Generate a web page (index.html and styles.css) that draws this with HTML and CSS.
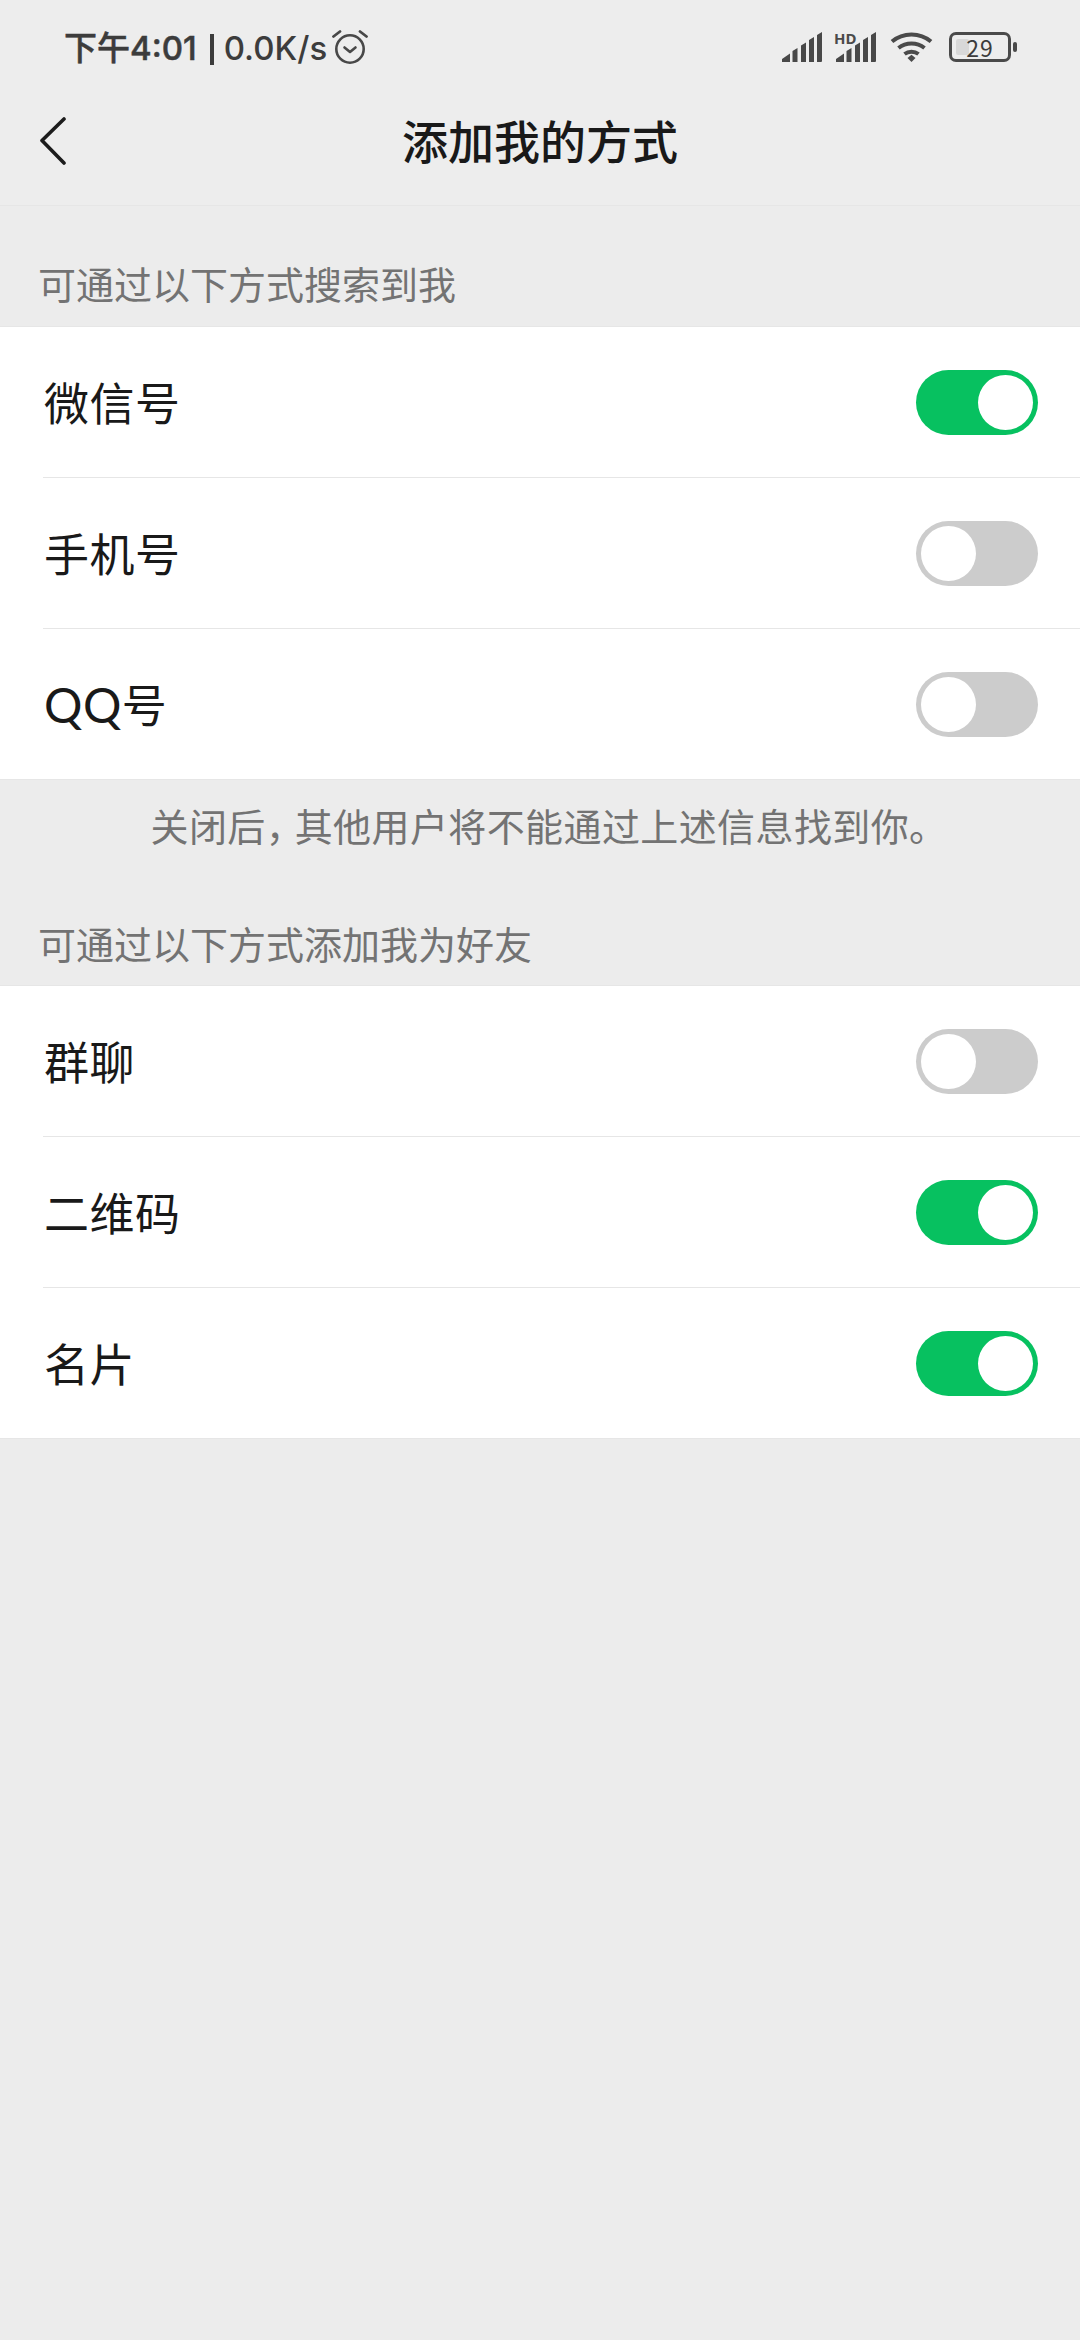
FILE: index.html
```html
<!DOCTYPE html>
<html lang="zh-CN">
<head>
<meta charset="utf-8">
<title>添加我的方式</title>
<link rel="stylesheet" href="styles.css">
</head>
<body>
<div class="page">
  <header class="top">
    <div class="status">
      <div class="status-left">
        <span class="time">下午4:01</span>
        <span class="bar"></span>
        <span class="speed">0.0K/s</span>
        <svg class="alarm" width="36" height="36" viewBox="0 0 36 36" fill="none" stroke="#484848" stroke-width="2.6">
          <circle cx="18" cy="20" r="13.700"/>
          <path d="M12.500 18.500 18 23 23.500 18.500" stroke-linecap="round" stroke-linejoin="round"/>
          <path d="M1.500 7.500 8 2.500M34.500 7.500 28 2.500" stroke-linecap="round" stroke-width="2.800"/>
        </svg>
      </div>
      <div class="status-right">
        <svg class="sig" width="41" height="30" viewBox="0 0 41 30" fill="#484848">
          <path d="M0 30V27L8 21.500V30ZM10.500 30V19L15.500 16V30ZM19 30V13.500L24 10.500V30ZM27 30V8L32 5V30ZM35 30V3L40 0V29a1 1 0 0 1-1 1Z"/>
        </svg>
        <div class="hd">
          <span class="hd-text">HD</span>
          <svg width="41" height="30" viewBox="0 0 41 30" fill="#484848">
            <path d="M0 30V27L8 21.500V30ZM10.500 30V19L15.500 16V30ZM19 30V13.500L24 10.500V30ZM27 30V8L32 5V30ZM35 30V3L40 0V29a1 1 0 0 1-1 1Z"/>
          </svg>
        </div>
        <svg class="wifi" width="43" height="30" viewBox="0 0 43 30" fill="none" stroke="#4a4a4a" stroke-width="4">
          <path d="M2 9.500C13 0 30 0 41 9.500"/>
          <path d="M8.500 16C16 10 27 10 34.500 16"/>
          <path d="M14.500 22C18.500 19 24.500 19 28.500 22"/>
          <path d="M17.500 26 21.500 22.800 25.500 26 21.500 30Z" fill="#4a4a4a" stroke="none"/>
        </svg>
        <div class="battery">
          <div class="battery-body">
            <span class="battery-fill"></span>
            <span class="battery-num">29</span>
          </div>
          <span class="battery-nub"></span>
        </div>
      </div>
    </div>
    <nav class="nav">
      <svg class="back" width="28" height="48" viewBox="0 0 28 48" fill="none" stroke="#1c1c1c" stroke-width="3.600" stroke-linecap="round" stroke-linejoin="round">
        <path d="M25 2 3 23.500 25 46"/>
      </svg>
      <h1 class="title">添加我的方式</h1>
    </nav>
  </header>

  <div class="section-label first">可通过以下方式搜索到我</div>
  <div class="group">
    <div class="row"><div class="row-inner"><span class="row-text">微信号</span><span class="switch on"><i class="knob"></i></span></div></div>
    <div class="row"><div class="row-inner"><span class="row-text">手机号</span><span class="switch"><i class="knob"></i></span></div></div>
    <div class="row"><div class="row-inner"><span class="row-text"><span class="latin">QQ</span>号</span><span class="switch"><i class="knob"></i></span></div></div>
  </div>
  <div class="hint">关闭后<span class="comma">，</span>其他用户将不能通过上述信息找到你。</div>
  <div class="section-label second">可通过以下方式添加我为好友</div>
  <div class="group">
    <div class="row"><div class="row-inner"><span class="row-text">群聊</span><span class="switch"><i class="knob"></i></span></div></div>
    <div class="row"><div class="row-inner"><span class="row-text">二维码</span><span class="switch on"><i class="knob"></i></span></div></div>
    <div class="row"><div class="row-inner"><span class="row-text">名片</span><span class="switch on"><i class="knob"></i></span></div></div>
  </div>
</div>
</body>
</html>
```
FILE: styles.css
```css
* { box-sizing: border-box; }
html, body { margin: 0; padding: 0; }
body {
  width: 1080px;
  height: 2340px;
  background: #ececec;
  font-family: "Noto Sans CJK SC", "Noto Sans", sans-serif;
  overflow: hidden;
}
.page { display: flex; flex-direction: column; width: 1080px; }

.top { background: #ededed; border-bottom: 1px solid #e6e6e6; height: 206px; display: flex; flex-direction: column; }
.status {
  height: 86px;
  padding: 28px 63px 0 64px;
  display: flex;
  justify-content: space-between;
  align-items: flex-start;
}
.status-left { display: flex; align-items: center; }
.time, .speed { font-family: Inter, "Noto Sans CJK SC", sans-serif; font-size: 33px; line-height: 40px; font-weight: 500; color: #3c3c3c; white-space: nowrap; }
.time { -webkit-text-stroke: 0.5px #3c3c3c; }
.bar { width: 4px; height: 31px; background: #3c3c3c; margin: 3px 10px 0 13px; }
.alarm { margin: -3px 0 0 5px; }
.status-right { display: flex; align-items: flex-end; height: 34px; }
.sig { margin-right: 13px; }
.hd { position: relative; width: 41px; height: 30px; margin-right: 13px; }
.hd svg { display: block; }
.hd-text { position: absolute; left: -2px; top: -1px; font: 700 15px/15px "Noto Sans", sans-serif; color: #4a4a4a; }
.wifi { margin-right: 16px; }
.battery { display: flex; align-items: center; gap: 2px; }
.battery-body {
  position: relative;
  width: 62px;
  height: 30px;
  border: 3px solid #4a4a4a;
  border-radius: 7px;
  display: flex;
  align-items: center;
  justify-content: center;
}
.battery-fill { position: absolute; left: 4px; top: 4px; bottom: 4px; width: 13px; background: #d8d8d8; border-radius: 2px; }
.battery-num { position: relative; font-size: 23px; line-height: 24px; color: #3c3c3c; letter-spacing: 1px; }
.battery-nub { width: 4px; height: 10px; background: #4a4a4a; border-radius: 2px; }

.nav { position: relative; flex: 1; display: flex; align-items: center; justify-content: center; padding-bottom: 14px; }
.back { position: absolute; left: 39px; top: 31px; }
.title { margin: 0; font-size: 46px; line-height: 60px; font-weight: 500; color: #191919; }

.section-label { font-size: 38px; line-height: 50px; color: #737373; padding-left: 38px; }
.section-label.first { padding-top: 52px; padding-bottom: 18px; }
.section-label.second { padding-top: 68px; padding-bottom: 17px; }

.group { background: #fff; border-top: 1px solid #e6e6e6; border-bottom: 1px solid #e6e6e6; }
.row { padding-left: 43px; }
.row-inner {
  height: 151px;
  display: flex;
  align-items: center;
  justify-content: space-between;
  padding-right: 42px;
  border-bottom: 1px solid #e6e6e6;
}
.row:last-child .row-inner { border-bottom: 0; height: 150px; }
.row-text { font-size: 45px; line-height: 60px; color: #191919; padding-left: 1px; letter-spacing: 0.5px; }
.latin { font-family: Lato, sans-serif; font-size: 48px; letter-spacing: 0.5px; }

.hint { text-align: center; font-size: 38px; line-height: 50px; color: #737373; padding: 20px 0 0 18px; letter-spacing: 0.4px; }
.comma { letter-spacing: -9px; }

.switch {
  display: flex;
  align-items: center;
  justify-content: flex-start;
  width: 122px;
  height: 65px;
  padding: 0 5px;
  border-radius: 33px;
  background: #cccccc;
}
.switch.on { background: #07c160; justify-content: flex-end; }
.knob { display: block; width: 55px; height: 55px; border-radius: 50%; background: #fff; }
```
